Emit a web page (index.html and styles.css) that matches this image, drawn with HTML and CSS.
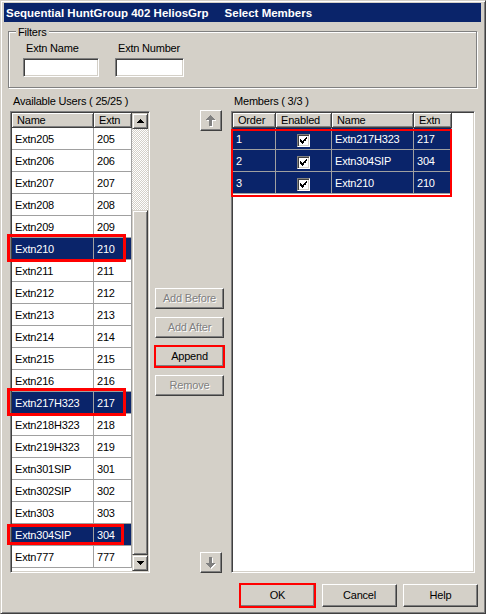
FILE: index.html
```html
<!DOCTYPE html>
<html>
<head>
<meta charset="utf-8">
<title>Select Members</title>
<link rel="stylesheet" href="styles.css">
</head>
<body>
<div class="window">
  <div class="titlebar"><span>Sequential HuntGroup 402 HeliosGrp</span><span class="title-sub">Select Members</span></div>

  <div class="group">
    <div class="legend">Filters</div>
    <div class="filters">
      <div class="field f-name"><label>Extn Name</label><div class="input"></div></div>
      <div class="field f-num"><label>Extn Number</label><div class="input"></div></div>
    </div>
  </div>

  <div class="main">
    <div class="col col-users">
      <div class="sec-label">Available Users ( 25/25 )</div>
      <div class="listbox">
        <div class="lv lv-users">
          <div class="lv-head"><div class="hc w-name">Name</div><div class="hc w-extn">Extn</div></div>
          <div class="lv-body">
            <div class="row"><div class="cell w-name">Extn205</div><div class="cell w-extn">205</div></div>
            <div class="row"><div class="cell w-name">Extn206</div><div class="cell w-extn">206</div></div>
            <div class="row"><div class="cell w-name">Extn207</div><div class="cell w-extn">207</div></div>
            <div class="row"><div class="cell w-name">Extn208</div><div class="cell w-extn">208</div></div>
            <div class="row"><div class="cell w-name">Extn209</div><div class="cell w-extn">209</div></div>
            <div class="row sel"><div class="cell w-name">Extn210</div><div class="cell w-extn">210</div><span class="mark mark-a"></span></div>
            <div class="row"><div class="cell w-name">Extn211</div><div class="cell w-extn">211</div></div>
            <div class="row"><div class="cell w-name">Extn212</div><div class="cell w-extn">212</div></div>
            <div class="row"><div class="cell w-name">Extn213</div><div class="cell w-extn">213</div></div>
            <div class="row"><div class="cell w-name">Extn214</div><div class="cell w-extn">214</div></div>
            <div class="row"><div class="cell w-name">Extn215</div><div class="cell w-extn">215</div></div>
            <div class="row"><div class="cell w-name">Extn216</div><div class="cell w-extn">216</div></div>
            <div class="row sel"><div class="cell w-name">Extn217H323</div><div class="cell w-extn">217</div><span class="mark mark-a"></span></div>
            <div class="row"><div class="cell w-name">Extn218H323</div><div class="cell w-extn">218</div></div>
            <div class="row"><div class="cell w-name">Extn219H323</div><div class="cell w-extn">219</div></div>
            <div class="row"><div class="cell w-name">Extn301SIP</div><div class="cell w-extn">301</div></div>
            <div class="row"><div class="cell w-name">Extn302SIP</div><div class="cell w-extn">302</div></div>
            <div class="row"><div class="cell w-name">Extn303</div><div class="cell w-extn">303</div></div>
            <div class="row sel"><div class="cell w-name">Extn304SIP</div><div class="cell w-extn">304</div><span class="mark mark-b"></span></div>
            <div class="row"><div class="cell w-name">Extn777</div><div class="cell w-extn">777</div></div>
          </div>
        </div>
        <div class="vscroll">
          <div class="sb-btn"><svg width="7" height="4" viewBox="0 0 7 4" shape-rendering="crispEdges"><path d="M3 0h1v1H3zM2 1h3v1H2zM1 2h5v1H1zM0 3h7v1H0z" fill="#000"/></svg></div>
          <div class="sb-track"></div>
          <div class="sb-thumb"></div>
          <div class="sb-btn"><svg width="7" height="4" viewBox="0 0 7 4" shape-rendering="crispEdges"><path d="M0 0h7v1H0zM1 1h5v1H1zM2 2h3v1H2zM3 3h1v1H3z" fill="#000"/></svg></div>
        </div>
      </div>
    </div>

    <div class="col col-actions">
      <div class="btn btn-arrow btn-up">
        <svg width="10" height="12" viewBox="0 0 10 12" shape-rendering="crispEdges">
          <path transform="translate(1,1)" fill="#fff" d="M4 0h1v1h1v1h1v1h1v1h1v1H6v6H3V5H0V4h1V3h1V2h1V1h1z"/>
          <path fill="#808080" d="M4 0h1v1h1v1h1v1h1v1h1v1H6v6H3V5H0V4h1V3h1V2h1V1h1z"/>
        </svg>
      </div>
      <div class="actions">
        <div class="btn disabled">Add Before</div>
        <div class="btn disabled">Add After</div>
        <div class="btn marked">Append</div>
        <div class="btn disabled">Remove</div>
      </div>
      <div class="btn btn-arrow btn-down">
        <svg width="10" height="12" viewBox="0 0 10 12" shape-rendering="crispEdges">
          <path transform="matrix(1 0 0 -1 1 12)" fill="#fff" d="M4 0h1v1h1v1h1v1h1v1h1v1H6v6H3V5H0V4h1V3h1V2h1V1h1z"/>
          <path transform="matrix(1 0 0 -1 0 11)" fill="#808080" d="M4 0h1v1h1v1h1v1h1v1h1v1H6v6H3V5H0V4h1V3h1V2h1V1h1z"/>
        </svg>
      </div>
    </div>

    <div class="col col-members">
      <div class="sec-label">Members ( 3/3 )</div>
      <div class="listbox">
        <div class="lv lv-members">
          <div class="lv-head"><div class="hc w-order">Order</div><div class="hc w-enabled">Enabled</div><div class="hc w-mname">Name</div><div class="hc w-extn">Extn</div></div>
          <div class="lv-body members-body">
            <div class="row sel"><div class="cell w-order">1</div><div class="cell w-enabled c-chk"><span class="chk"><svg width="7" height="7" viewBox="0 0 7 7" shape-rendering="crispEdges"><path d="M6 0h1v2H6zM5 1h1v1H5zM0 2h1v3H0zM4 2h2v2H4zM1 3h1v2H1zM3 3h1v2H3zM2 4h1v1H2zM1 5h3v1H1zM2 6h1v1H2z" fill="#000"/></svg></span></div><div class="cell w-mname">Extn217H323</div><div class="cell w-extn">217</div></div>
            <div class="row sel"><div class="cell w-order">2</div><div class="cell w-enabled c-chk"><span class="chk"><svg width="7" height="7" viewBox="0 0 7 7" shape-rendering="crispEdges"><path d="M6 0h1v2H6zM5 1h1v1H5zM0 2h1v3H0zM4 2h2v2H4zM1 3h1v2H1zM3 3h1v2H3zM2 4h1v1H2zM1 5h3v1H1zM2 6h1v1H2z" fill="#000"/></svg></span></div><div class="cell w-mname">Extn304SIP</div><div class="cell w-extn">304</div></div>
            <div class="row sel"><div class="cell w-order">3</div><div class="cell w-enabled c-chk"><span class="chk"><svg width="7" height="7" viewBox="0 0 7 7" shape-rendering="crispEdges"><path d="M6 0h1v2H6zM5 1h1v1H5zM0 2h1v3H0zM4 2h2v2H4zM1 3h1v2H1zM3 3h1v2H3zM2 4h1v1H2zM1 5h3v1H1zM2 6h1v1H2z" fill="#000"/></svg></span></div><div class="cell w-mname">Extn210</div><div class="cell w-extn">210</div></div>
            <span class="mark mark-members"></span>
          </div>
        </div>
      </div>
    </div>
  </div>

  <div class="footer">
    <div class="btn btn-ok marked">OK</div>
    <div class="btn">Cancel</div>
    <div class="btn">Help</div>
  </div>
</div>
</body>
</html>
```

FILE: styles.css
```css
html, body {
  margin: 0;
  padding: 0;
}

body {
  background: #d4d0c8;
  font-family: "Liberation Sans", Arial, sans-serif;
  font-size: 11px;
  letter-spacing: -0.2px;
  color: #000;
}

.window {
  box-sizing: border-box;
  width: 486px;
  height: 614px;
  background: #d4d0c8;
  border: 1px solid;
  border-color: #d4d0c8 #404040 #404040 #d4d0c8;
  box-shadow: inset 1px 1px 0 #fff, inset -1px -1px 0 #808080;
  padding: 2px 4px 0 3px;
  overflow: hidden;
}

/* title bar */
.titlebar {
  box-sizing: border-box;
  height: 19px;
  background: #0a246a;
  color: #fff;
  font-weight: bold;
  font-size: 11.5px;
  letter-spacing: 0;
  line-height: 17px;
  padding: 2px 0 0 2px;
  white-space: nowrap;
}

.title-sub {
  margin-left: 16px;
}

/* filters group */
.group {
  box-sizing: border-box;
  width: 469px;
  height: 57px;
  margin: 9px 0 0 4px;
  border: 1px solid #808080;
  box-shadow: inset 1px 1px 0 #fff, 1px 1px 0 #fff;
}

.legend {
  width: fit-content;
  margin: -6px 0 0 7px;
  padding: 0 2px;
  background: #d4d0c8;
  line-height: 13px;
}

.filters {
  display: flex;
  gap: 16px;
  margin-top: 3px;
  padding-left: 14px;
}

.field label {
  display: block;
  line-height: 13px;
  padding-left: 3px;
}

.input {
  box-sizing: border-box;
  height: 19px;
  margin-top: 3px;
  background: #fff;
  border: 1px solid;
  border-color: #808080 #fff #fff #808080;
  box-shadow: inset 1px 1px 0 #404040, inset -1px -1px 0 #d4d0c8;
}

.f-name .input { width: 76px; }
.f-num .input { width: 69px; }

/* main area */
.main {
  display: flex;
  height: 478px;
  margin: 7px 0 0 6px;
}

.col {
  display: flex;
  flex-direction: column;
}

.col-users { width: 140px; }
.col-actions { width: 69px; margin-left: 5px; }
.col-members { width: 244px; margin-left: 7px; }

.sec-label {
  height: 13px;
  line-height: 13px;
  padding-left: 3px;
  white-space: nowrap;
}

.listbox {
  box-sizing: border-box;
  flex: 1;
  display: flex;
  margin-top: 3px;
  padding: 1px;
  background: #fff;
  border: 1px solid;
  border-color: #808080 #fff #fff #808080;
  box-shadow: inset 1px 1px 0 #404040, inset -1px -1px 0 #d4d0c8;
}

.lv-users { width: 120px; }
.lv-members { width: 240px; }

.lv-head {
  display: flex;
  height: 15px;
}

.hc {
  box-sizing: border-box;
  height: 15px;
  background: #d4d0c8;
  border-right: 1px solid #404040;
  border-bottom: 1px solid #404040;
  box-shadow: inset 1px 1px 0 #fff, inset -1px -1px 0 #808080;
  padding: 1px 0 0 5px;
  line-height: 13px;
  white-space: nowrap;
  overflow: hidden;
}

.lv-body {
  position: relative;
}

.row {
  position: relative;
  display: flex;
  height: 22px;
}

.cell {
  box-sizing: border-box;
  height: 22px;
  border-right: 1px solid #a0a0a0;
  border-bottom: 1px solid #a0a0a0;
  padding: 2px 0 0 3px;
  line-height: 19px;
  white-space: nowrap;
  overflow: hidden;
}

.sel .cell {
  background: #0a246a;
  color: #fff;
}

.w-name { width: 82px; }
.w-extn { width: 38px; }
.w-order { width: 43px; }
.w-enabled { width: 56px; }
.w-mname { width: 82px; }

.c-chk {
  display: flex;
  justify-content: center;
  align-items: flex-start;
  padding: 6px 0 0 0;
}

.chk {
  box-sizing: border-box;
  width: 13px;
  height: 13px;
  display: flex;
  align-items: center;
  justify-content: center;
  background: #fff;
  border: 1px solid;
  border-color: #808080 #fff #fff #808080;
  box-shadow: inset 1px 1px 0 #404040, inset -1px -1px 0 #d4d0c8;
}

.chk svg { display: block; }

/* annotation boxes */
.mark {
  position: absolute;
  z-index: 1;
  box-sizing: border-box;
  border: 3px solid #f00;
  pointer-events: none;
}

.mark-a {
  left: -5px;
  top: -4px;
  width: 119px;
  height: 28px;
}

.mark-b {
  left: -5px;
  top: 0;
  width: 117px;
  height: 21px;
}

.mark-members {
  border-width: 2px;
  left: -2px;
  top: 1px;
  width: 221px;
  height: 68px;
}

/* scrollbar */
.vscroll {
  width: 16px;
  display: flex;
  flex-direction: column;
}

.sb-btn,
.sb-thumb {
  box-sizing: border-box;
  background: #d4d0c8;
  border: 1px solid;
  border-color: #d4d0c8 #404040 #404040 #d4d0c8;
  box-shadow: inset 1px 1px 0 #fff, inset -1px -1px 0 #808080;
}

.sb-btn {
  height: 16px;
  display: flex;
  align-items: center;
  justify-content: center;
}

.sb-btn svg { display: block; }

.sb-track {
  flex: 1;
  background-color: #fff;
  background-image: conic-gradient(#fff 25%, #d4d0c8 0 50%, #fff 0 75%, #d4d0c8 0);
  background-size: 2px 2px;
}

.sb-thumb {
  height: 345px;
}

/* buttons */
.btn {
  box-sizing: border-box;
  background: #d4d0c8;
  border: 1px solid;
  border-color: #fff #404040 #404040 #fff;
  box-shadow: inset -1px -1px 0 #808080;
  text-align: center;
  white-space: nowrap;
}

.disabled {
  color: #808080;
  text-shadow: 1px 1px 0 #fff;
}

.marked {
  outline: 2px solid #f00;
  outline-offset: -1px;
}

.btn-arrow {
  width: 22px;
  height: 21px;
  align-self: flex-end;
  margin-right: 2px;
  display: flex;
  align-items: center;
  justify-content: center;
}

.btn-arrow svg { display: block; }

.btn-up { margin-top: 15px; }
.btn-down { margin-top: auto; }

.actions {
  display: flex;
  flex-direction: column;
  gap: 8px;
  margin-top: 157px;
}

.actions .btn {
  height: 21px;
  line-height: 19px;
}

/* footer */
.footer {
  display: flex;
  justify-content: flex-end;
  gap: 6px;
  margin-top: 11px;
  padding-right: 3px;
}

.footer .btn {
  width: 75px;
  height: 23px;
  line-height: 21px;
}

.btn-ok {
  margin-right: 1px;
}
```
